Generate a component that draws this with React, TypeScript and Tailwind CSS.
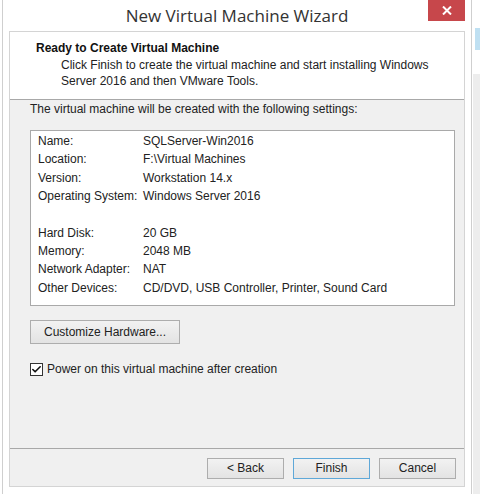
import { Check } from 'lucide-react'

const settings: [string, string][] = [
  ['Name:', 'SQLServer-Win2016'],
  ['Location:', 'F:\\Virtual Machines'],
  ['Version:', 'Workstation 14.x'],
  ['Operating System:', 'Windows Server 2016'],
  ['', ''],
  ['Hard Disk:', '20 GB'],
  ['Memory:', '2048 MB'],
  ['Network Adapter:', 'NAT'],
  ['Other Devices:', 'CD/DVD, USB Controller, Printer, Sound Card'],
]

const font = { fontFamily: '"Liberation Sans", Arial, sans-serif' }

const WinButton = ({ label, primary, className }: { label: string; primary?: boolean; className?: string }) => (
  <button
    className={`h-[21px] w-[77px] text-[12px] text-[#222] bg-gradient-to-b from-[#f2f2f2] to-[#e3e3e3] border ${
      primary ? 'border-[#5fa8d8]' : 'border-[#adadad]'
    } ${className ?? ''}`}
  >
    {label}
  </button>
)

const App = () => {
  return (
    <div className="w-[480px] h-[494px] bg-white flex overflow-hidden text-[#222]" style={font}>
      <div className="ml-[2px] w-[470px] h-full border-l border-r border-[#cfcfcf] bg-white flex flex-col relative">
        <div className="h-[31px] flex items-center justify-center">
          <span className="text-[17px] text-[#333] pt-[1px]" style={{ fontFamily: '"Open Sans", "Noto Sans", sans-serif' }}>
            New Virtual Machine Wizard
          </span>
        </div>
        <div className="absolute top-0 right-[6px] w-[37px] h-[21px] bg-[#c7474b] flex items-center justify-center">
          <svg width="10" height="9" viewBox="0 0 10 9">
            <path d="M1 0.5 L9 8.5 M9 0.5 L1 8.5" stroke="white" strokeWidth="2" />
          </svg>
        </div>

        <div className="ml-[6px] w-[456px] h-[456px] border border-[#d4d4d4] flex flex-col">
          <div className="h-[68px] bg-white border-b border-[#a8a8a8] pl-[26px] pt-[7px]">
            <div className="text-[12px] font-bold text-[#111]">Ready to Create Virtual Machine</div>
            <div className="pl-[25px] text-[12px] leading-[16px] text-[#222]">
              Click Finish to create the virtual machine and start installing Windows
              <br />
              Server 2016 and then VMware Tools.
            </div>
          </div>

          <div className="flex-1 bg-[#f0f0f0] border-b border-[#a8a8a8] pl-[20px]">
            <div className="text-[12px] h-[17px]">The virtual machine will be created with the following settings:</div>
            <div className="mt-[13px] w-[425px] h-[176px] bg-white border border-[#a9a9a9] pt-[1px] pl-[7px]">
              {settings.map(([k, v], i) => (
                <div key={i} className="flex h-[18.3px] items-center text-[12px]">
                  <span className="w-[105px]">{k}</span>
                  <span>{v}</span>
                </div>
              ))}
            </div>
            <button className="mt-[14px] w-[150px] h-[24px] text-[12px] text-[#222] bg-gradient-to-b from-[#f2f2f2] to-[#e3e3e3] border border-[#adadad]">
              Customize Hardware...
            </button>
            <div className="mt-[16px] flex items-center gap-[4px] text-[12px]">
              <div className="w-[13px] h-[13px] bg-white border border-[#333] flex items-center justify-center">
                <Check size={11} strokeWidth={3.5} className="text-[#111]" />
              </div>
              <span>Power on this virtual machine after creation</span>
            </div>
          </div>

          <div className="h-[37px] bg-[#f0f0f0] flex items-center justify-end pr-[8px] pt-[1px]">
            <WinButton label="< Back" />
            <WinButton label="Finish" primary className="ml-[9px]" />
            <WinButton label="Cancel" className="ml-[9px]" />
          </div>
        </div>
      </div>
      <div className="flex-1 flex flex-col">
        <div className="h-[28px]" />
        <div className="ml-[3px] h-[22px] bg-[#bfe0f2]" />
        <div className="h-[24px]" />
        <div className="flex-1 ml-[1px] bg-[#ededed]" />
      </div>
    </div>
  )
}

export default App
